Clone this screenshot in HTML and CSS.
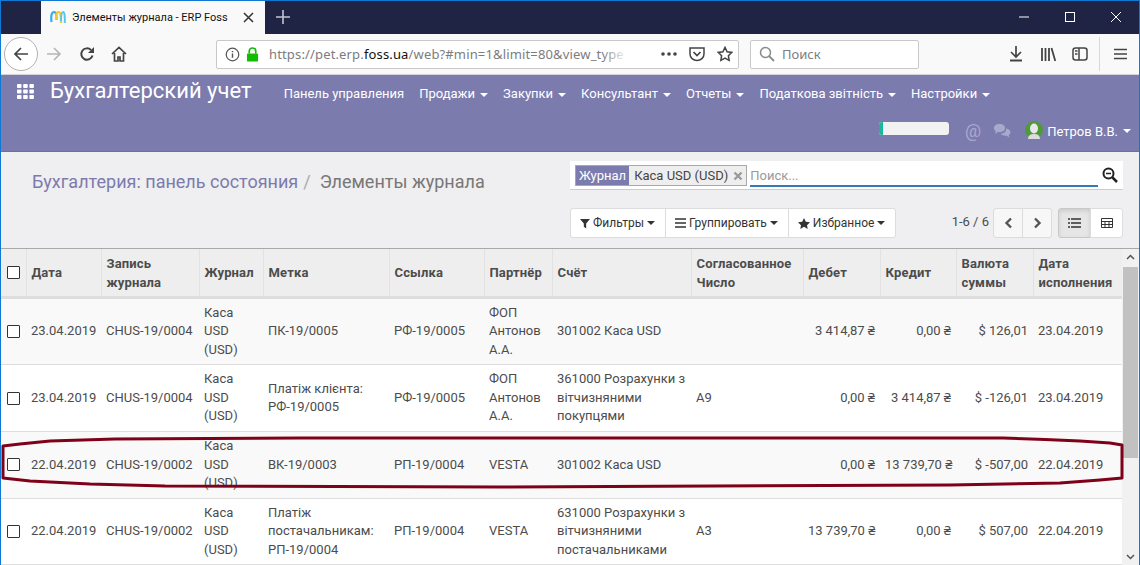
FILE: index.html
```html
<!DOCTYPE html>
<html lang="ru">
<head>
<meta charset="utf-8">
<title>Элементы журнала - ERP Foss</title>
<link rel="stylesheet" href="styles.css">
</head>
<body>
<div class="window">
  <div class="titlebar">
    <div class="tab">
      <svg class="favicon" width="16" height="18" viewBox="0 0 16 18"><path d="M1.500 13C.8 7 1.500 3 4 3s2.500 4 2.500 8" fill="none" stroke="#35aef0" stroke-width="2.200"/><path d="M6 11c0-5 .2-8 2.500-8S11 8 11 14" fill="none" stroke="#f5c62e" stroke-width="2.200"/><path d="M11 12c0-6 .3-9 2-9s2 5 1.800 11" fill="none" stroke="#58c6ea" stroke-width="2"/></svg>
      <span class="tab-title">Элементы журнала - ERP Foss</span>
      <svg class="tab-close" width="11" height="11" viewBox="0 0 11 11"><path d="M1 1l9 9M10 1l-9 9" stroke="#333" stroke-width="1.500"/></svg>
    </div>
    <svg class="newtab" width="14" height="14" viewBox="0 0 14 14"><path d="M7 0v14M0 7h14" stroke="#c4c5d2" stroke-width="1.600"/></svg>
    <div class="winbtns">
      <svg width="12" height="12" viewBox="0 0 12 12"><path d="M1 6h10" stroke="#fff"/></svg>
      <svg width="12" height="12" viewBox="0 0 12 12"><rect x="1.500" y="1.500" width="9" height="9" fill="none" stroke="#fff"/></svg>
      <svg width="12" height="12" viewBox="0 0 12 12"><path d="M1 1l10 10M11 1L1 11" stroke="#fff"/></svg>
    </div>
  </div>

  <div class="toolbar">
    <div class="nav-back"><svg width="16" height="16" viewBox="0 0 16 16"><path d="M15 8H2M8 2L2 8l6 6" fill="none" stroke="#444" stroke-width="1.700"/></svg></div>
    <svg class="tb-ico fwd" width="16" height="16" viewBox="0 0 16 16"><path d="M1 8h13M8 2l6 6-6 6" fill="none" stroke="#b5b5b8" stroke-width="1.600"/></svg>
    <svg class="tb-ico reload" width="16" height="16" viewBox="0 0 16 16"><path d="M13.500 9.500A5.700 5.700 0 1 1 12 4" fill="none" stroke="#444" stroke-width="2"/><path d="M15 1v6H9z" fill="#444"/></svg>
    <svg class="tb-ico home" width="16" height="16" viewBox="0 0 16 16"><path d="M1 8l7-6.500L15 8M3.500 7v8h3.500v-4h2v4h3.500V7" fill="none" stroke="#444" stroke-width="1.700"/></svg>
    <div class="urlbar">
      <svg class="info" width="15" height="15" viewBox="0 0 16 16"><circle cx="8" cy="8" r="6.700" fill="none" stroke="#555" stroke-width="1.300"/><path d="M8 7v4.500M8 4.200v1.500" stroke="#555" stroke-width="1.500"/></svg>
      <svg class="lock" width="13" height="15" viewBox="0 0 14 16"><path d="M3.500 7V4.500a3.500 3.500 0 0 1 7 0V7" fill="none" stroke="#12bc00" stroke-width="1.800"/><rect x="1" y="7" width="12" height="8.500" rx="1" fill="#12bc00"/></svg>
      <span class="url">https://pet.erp.<b>foss.ua</b>/web?#min=1&amp;limit=80&amp;view_type</span>
      <span class="url-fade"></span>
      <svg class="dots" width="16" height="4" viewBox="0 0 16 4"><circle cx="2" cy="2" r="1.800" fill="#444"/><circle cx="8" cy="2" r="1.800" fill="#444"/><circle cx="14" cy="2" r="1.800" fill="#444"/></svg>
      <svg class="pocket" width="16" height="16" viewBox="0 0 16 16"><path d="M1 2h14v6a7 6.500 0 0 1-14 0z" fill="none" stroke="#444" stroke-width="1.500"/><path d="M4.500 6L8 9.500 11.500 6" fill="none" stroke="#444" stroke-width="1.700"/></svg>
      <svg class="star" width="16" height="16" viewBox="0 0 17 17"><path d="M8.500 1.500l2.200 4.600 5 .7-3.600 3.500.8 5-4.400-2.400-4.400 2.400.8-5L1.300 6.800l5-.7z" fill="none" stroke="#444" stroke-width="1.600"/></svg>
    </div>
    <div class="websearch">
      <svg width="16" height="16" viewBox="0 0 16 16"><circle cx="6.500" cy="6.500" r="5" fill="none" stroke="#8a8a8a" stroke-width="1.500"/><path d="M10 10l5 5" stroke="#8a8a8a" stroke-width="1.800"/></svg>
      <span>Поиск</span>
    </div>
    <div class="tb-right">
      <svg class="t-dl" width="14" height="16" viewBox="0 0 14 16"><path d="M7 0v10M2 6l5 5 5-5" fill="none" stroke="#444" stroke-width="1.700"/><path d="M1 14.500h12" stroke="#444" stroke-width="2"/></svg>
      <svg class="t-lib" width="15" height="15" viewBox="0 0 15 15"><path d="M1 1v13M4.500 1v13M8 1v13M10.500 1l3.800 13" fill="none" stroke="#444" stroke-width="1.800"/></svg>
      <svg class="t-side" width="16" height="14" viewBox="0 0 16 14"><rect x="1" y="1" width="14" height="12" rx="2.500" fill="none" stroke="#444" stroke-width="1.500"/><path d="M7 1v12M3 4h2.500M3 7h2.500" stroke="#444" stroke-width="1.500"/></svg>
      <i class="tb-sep"></i>
      <svg class="t-menu" width="13" height="12" viewBox="0 0 13 12"><path d="M0 1.500h13M0 6h13M0 10.500h13" stroke="#444" stroke-width="1.600"/></svg>
    </div>
  </div>

  <header class="appbar">
    <div class="app-main">
      <svg class="apps" width="17" height="15" viewBox="0 0 17 15"><g fill="#fff"><rect width="4.500" height="4" rx=".8"/><rect x="6.200" width="4.500" height="4" rx=".8"/><rect x="12.400" width="4.500" height="4" rx=".8"/><rect y="5.500" width="4.500" height="4" rx=".8"/><rect x="6.200" y="5.500" width="4.500" height="4" rx=".8"/><rect x="12.400" y="5.500" width="4.500" height="4" rx=".8"/><rect y="11" width="4.500" height="4" rx=".8"/><rect x="6.200" y="11" width="4.500" height="4" rx=".8"/><rect x="12.400" y="11" width="4.500" height="4" rx=".8"/></g></svg>
      <span class="brand">Бухгалтерский учет</span>
      <nav class="menu">
        <a>Панель управления</a>
        <a>Продажи<i class="caret"></i></a>
        <a>Закупки<i class="caret"></i></a>
        <a>Консультант<i class="caret"></i></a>
        <a>Отчеты<i class="caret"></i></a>
        <a>Податкова звітність<i class="caret"></i></a>
        <a>Настройки<i class="caret"></i></a>
      </nav>
    </div>
    <div class="app-sub">
      <div class="progress"><i></i></div>
      <span class="at">@</span>
      <svg class="chat" width="18" height="15" viewBox="0 0 18 15"><path d="M1 5c0-2.500 2.500-4 5.500-4S12 2.500 12 5s-2.500 4-5.500 4H5l-3 2 .8-2.700C1.700 7.700 1 6.500 1 5z" fill="#a9a9cc"/><path d="M13 5.500c2.500.3 4.500 1.700 4.500 3.700 0 1.200-.7 2.200-1.700 2.900l.6 2.400-2.800-1.800c-2.500.3-5-.5-6-2.200 3 .2 6-1.500 5.400-5z" fill="#a9a9cc"/></svg>
      <svg class="avatar" width="18" height="18" viewBox="0 0 18 18"><circle cx="9" cy="9" r="9" fill="#4f9a3a"/><ellipse cx="9" cy="7.500" rx="4" ry="5" fill="#e8e8e8"/><path d="M3 18c0-4 3-5 6-5s6 1 6 5z" fill="#dcdcdc"/></svg>
      <span class="user">Петров В.В.</span><i class="caret"></i>
    </div>
  </header>

  <section class="panel">
    <div class="panel-top">
      <h1 class="crumbs"><a>Бухгалтерия: панель состояния</a><span class="slash">/</span><span class="cur">Элементы журнала</span></h1>
      <div class="search">
        <div class="facet"><span class="facet-label">Журнал</span><span class="facet-val">Каса USD (USD)</span><svg width="10" height="10" viewBox="0 0 10 10"><path d="M1.500 1.500l7 7M8.500 1.500l-7 7" stroke="#9a9a9a" stroke-width="2.400"/></svg></div>
        <div class="search-input">Поиск...</div>
        <svg class="search-ico" width="16" height="16" viewBox="0 0 16 16"><circle cx="6.500" cy="6.500" r="5" fill="none" stroke="#222" stroke-width="2"/><path d="M10.500 10.500L15 15" stroke="#222" stroke-width="2.500"/><path d="M4 6.500h5" stroke="#222" stroke-width="1.500"/></svg>
      </div>
    </div>
    <div class="panel-bottom">
      <div class="btn-group">
        <button class="btn"><svg width="10" height="11" viewBox="0 0 11 11"><path d="M0 .5h11L6.800 5.500V11L4.200 9V5.500z" fill="#333"/></svg>Фильтры<i class="caret dark"></i></button>
        <button class="btn"><svg width="11" height="10" viewBox="0 0 11 10"><path d="M0 1h11M0 5h11M0 9h11" stroke="#333" stroke-width="1.600"/></svg>Группировать<i class="caret dark"></i></button>
        <button class="btn"><svg width="12" height="11" viewBox="0 0 12 11"><path d="M6 0l1.800 3.700 4.200.6-3 2.900.7 3.800L6 8.800 2.300 11 3 7.200 0 4.300l4.200-.6z" fill="#333"/></svg>Избранное<i class="caret dark"></i></button>
      </div>
      <div class="pager">
        <span class="pager-txt">1-6 / 6</span>
        <div class="pager-btns">
          <button class="pbtn"><svg width="9" height="12" viewBox="0 0 9 12"><path d="M7 1.500L2.500 6 7 10.500" fill="none" stroke="#555" stroke-width="2.400"/></svg></button>
          <button class="pbtn"><svg width="9" height="12" viewBox="0 0 9 12"><path d="M2 1.500L6.500 6 2 10.500" fill="none" stroke="#555" stroke-width="2.400"/></svg></button>
        </div>
        <div class="view-btns">
          <button class="vbtn on"><svg width="13" height="10" viewBox="0 0 13 10"><path d="M3 1h10M3 5h10M3 9h10" stroke="#333" stroke-width="1.600"/><path d="M0 1h2M0 5h2M0 9h2" stroke="#333" stroke-width="1.600"/></svg></button>
          <button class="vbtn"><svg width="12" height="10" viewBox="0 0 12 10"><path d="M.5.500h11v9H.500zM.5 3.500h11M.5 6.500h11M4 3.500v6M8 3.500v6" fill="none" stroke="#333"/></svg></button>
        </div>
      </div>
    </div>
  </section>

  <div class="list">
    <table class="grid">
      <colgroup>
        <col class="c0"><col class="c1"><col class="c2"><col class="c3"><col class="c4"><col class="c5"><col class="c6"><col class="c7"><col class="c8"><col class="c9"><col class="c10"><col class="c11"><col class="c12">
      </colgroup>
      <thead>
        <tr>
          <th><i class="cb"></i></th><th>Дата</th><th>Запись журнала</th><th>Журнал</th><th>Метка</th><th>Ссылка</th><th>Партнёр</th><th>Счёт</th><th>Согласованное Число</th><th>Дебет</th><th>Кредит</th><th>Валюта суммы</th><th>Дата исполнения</th>
        </tr>
      </thead>
      <tbody>
        <tr class="odd">
          <td><i class="cb"></i></td><td>23.04.2019</td><td>CHUS-19/0004</td><td>Каса USD (USD)</td><td>ПК-19/0005</td><td>РФ-19/0005</td><td>ФОП Антонов А.А.</td><td>301002 Каса USD</td><td></td><td class="r">3 414,87 ₴</td><td class="r">0,00 ₴</td><td class="r">$ 126,01</td><td>23.04.2019</td>
        </tr>
        <tr>
          <td><i class="cb"></i></td><td>23.04.2019</td><td>CHUS-19/0004</td><td>Каса USD (USD)</td><td>Платіж клієнта: РФ-19/0005</td><td>РФ-19/0005</td><td>ФОП Антонов А.А.</td><td>361000 Розрахунки з вітчизняними покупцями</td><td>A9</td><td class="r">0,00 ₴</td><td class="r">3 414,87 ₴</td><td class="r">$ -126,01</td><td>23.04.2019</td>
        </tr>
        <tr class="odd">
          <td><i class="cb"></i></td><td>22.04.2019</td><td>CHUS-19/0002</td><td>Каса USD (USD)</td><td>ВК-19/0003</td><td>РП-19/0004</td><td>VESTA</td><td>301002 Каса USD</td><td></td><td class="r">0,00 ₴</td><td class="r">13 739,70 ₴</td><td class="r">$ -507,00</td><td>22.04.2019</td>
        </tr>
        <tr>
          <td><i class="cb"></i></td><td>22.04.2019</td><td>CHUS-19/0002</td><td>Каса USD (USD)</td><td>Платіж постачальникам: РП-19/0004</td><td>РП-19/0004</td><td>VESTA</td><td>631000 Розрахунки з вітчизняними постачальниками</td><td>A3</td><td class="r">13 739,70 ₴</td><td class="r">0,00 ₴</td><td class="r">$ 507,00</td><td>22.04.2019</td>
        </tr>
      </tbody>
    </table>
    <div class="scrollbar">
      <svg width="9" height="6" viewBox="0 0 9 6"><path d="M1 5l3.500-3.500L8 5" fill="none" stroke="#555" stroke-width="1.500"/></svg>
      <div class="thumb"></div>
      <svg width="9" height="6" viewBox="0 0 9 6"><path d="M1 1l3.500 3.500L8 1" fill="none" stroke="#555" stroke-width="1.500"/></svg>
    </div>
  </div>

  <svg class="marker" width="1140" height="56" viewBox="0 0 1140 56"><path d="M3 10 L20 8 L50 5 L115 3 L300 2 L1003 2 L1045 3.500 L1080 5 L1110 7 L1122 9 L1122 42 L1100 44 L1060 47 L950 49 L500 51 L165 50 L90 48 L30 45 L3 42 Z" fill="none" stroke="#7f0019" stroke-width="3" stroke-linejoin="round"/></svg>
</div>
</body>
</html>
```
FILE: styles.css
```css
* { box-sizing: border-box; }
html, body { margin: 0; padding: 0; height: 100%; overflow: hidden; background: #fff; }
body { font-family: Roboto, "Noto Sans", sans-serif; font-size: 13px; color: #4c4c4c; }
.window { position: relative; width: 1140px; height: 565px; border: 1px solid #0f78d4; border-bottom: 0; overflow: hidden; display: flex; flex-direction: column; }

.titlebar { flex: 0 0 33px; background: #1f2344; display: flex; align-items: stretch; }
.tab { margin-left: 40px; width: 224px; background: #f9f9fa; display: flex; align-items: center; padding: 0 11px 0 9px; font-family: Roboto, sans-serif; font-size: 11px; color: #111; }
.favicon { margin-right: 6px; flex: none; }
.tab-title { flex: 1; white-space: nowrap; overflow: hidden; }
.newtab { align-self: center; margin-left: 11px; margin-top: -1px; }
.winbtns { margin-left: auto; display: flex; align-items: center; gap: 34px; padding-right: 17px; margin-top: -1px; }

.toolbar { flex: 0 0 41px; background: #f9f9fa; border-bottom: 1px solid #d4d4d6; display: flex; align-items: center; font-family: "Noto Sans", sans-serif; }
.nav-back { width: 34px; height: 34px; margin-left: 3px; border: 1px solid #b1b1b3; border-radius: 50%; background: #fff; display: flex; align-items: center; justify-content: center; flex: none; }
.tb-ico { flex: none; }
.fwd { margin-left: 8px; }
.reload { margin-left: 17px; }
.home { margin-left: 16px; }
.urlbar { width: 523px; height: 29px; margin-left: 89px; background: #fff; border: 1px solid #c9c9cb; border-radius: 2px; display: flex; align-items: center; padding-left: 8px; position: relative; }
.info { flex: none; }
.lock { margin-left: 6px; flex: none; }
.url { margin-left: 10px; width: 356px; flex: none; overflow: hidden; white-space: nowrap; color: #7c7c80; font-size: 13px; letter-spacing: .15px; }
.url b { font-weight: 400; color: #111; }
.url-fade { position: absolute; left: 385px; width: 26px; top: 0; bottom: 0; background: linear-gradient(90deg, rgba(255,255,255,0), #fff); }
.dots { margin-left: 36px; flex: none; }
.pocket { margin-left: 12px; flex: none; }
.star { margin-left: 12px; flex: none; }
.websearch { margin-left: 11px; width: 169px; height: 29px; background: #fff; border: 1px solid #c9c9cb; border-radius: 2px; display: flex; align-items: center; gap: 7px; padding-left: 8px; color: #7c7c80; font-size: 13px; flex: none; }
.tb-right { margin-left: auto; display: flex; align-items: center; padding-right: 12px; }
.t-lib { margin-left: 18px; }
.t-side { margin-left: 16px; }
.tb-sep { width: 1px; height: 34px; background: #d8d8da; margin-left: 11px; }
.t-menu { margin-left: 14px; }

.appbar { flex: 0 0 76px; background: #7c7bad; color: #fff; display: flex; flex-direction: column; }
.app-main { display: flex; align-items: center; height: 34px; padding-left: 16px; }
.apps { flex: none; margin-top: -1px; }
.brand { font-size: 22px; margin-left: 16px; white-space: nowrap; margin-top: -3px; }
.menu { display: flex; margin-left: 32px; gap: 15px; font-size: 13px; white-space: nowrap; margin-top: 3px; }
.caret { display: inline-block; width: 0; height: 0; border-top: 4px solid #fff; border-left: 4px solid transparent; border-right: 4px solid transparent; margin-left: 5px; vertical-align: middle; }
.caret.dark { border-top-color: #333; margin-left: 0; }
.app-sub { display: flex; align-items: center; justify-content: flex-end; height: 42px; padding-right: 8px; }
.progress { width: 70px; height: 13px; background: #f2f2f2; border-radius: 3px; overflow: hidden; margin-top: -3px; }
.progress i { display: block; width: 4px; height: 100%; background: #1fb59b; }
.at { margin-left: 16px; color: #a9a9cc; font-size: 18px; }
.chat { margin-left: 12px; }
.avatar { margin-left: 14px; }
.user { margin-left: 4px; font-size: 13px; margin-top: 2px; }
.app-sub .caret { margin-top: 2px; }

.panel { flex: 0 0 97px; background: #efeef0; border-top: 1px solid #6e6d9c; }
.panel-top { height: 52px; display: flex; align-items: flex-start; justify-content: space-between; padding-left: 31px; padding-right: 16px; padding-top: 9px; }
.crumbs { margin: 11px 0 0; font-size: 18px; font-weight: 400; white-space: nowrap; line-height: 20px; }
.crumbs a { color: #7c7bad; }
.slash { color: #aaa; margin: 0 9px 0 5px; }
.cur { color: #777; }
.search { width: 553px; height: 29px; background: #fff; border-bottom: 1px solid #ccc; display: flex; align-items: center; padding: 0 5px; position: relative; }
.facet { display: flex; align-items: center; height: 21px; margin-top: 1px; border: 1px solid #a8a8a8; background: #efeeef; color: #444; flex: none; }
.facet-label { background: #7c7bad; color: #fff; height: 100%; padding: 0 3px; line-height: 19px; }
.facet-val { padding: 0 5px; }
.facet svg { margin: 0 3px 0 0; }
.search-input { flex: 1; margin-left: 3px; margin-right: 4px; height: 23px; line-height: 23px; border-bottom: 2px solid #337ab7; color: #999; }
.search-ico { flex: none; }
.panel-bottom { display: flex; justify-content: space-between; padding-right: 16px; padding-left: 569px; height: 44px; }
.btn-group { display: flex; height: 30px; margin-top: 4px; }
button { font: inherit; }
.btn { background: #fff; color: #333; border: 1px solid #dcdcdc; margin-left: -1px; padding: 0 10px 0 9px; display: flex; align-items: center; gap: 3px; font-size: 12px; white-space: nowrap; border-radius: 0; }
.btn:first-child { border-radius: 3px 0 0 3px; margin-left: 0; }
.btn:last-child { border-radius: 0 3px 3px 0; }
.pager { display: flex; align-items: flex-start; margin-top: 4px; }
.pager-txt { color: #4c4c4c; margin-right: 5px; line-height: 28px; }
.pager-btns, .view-btns { display: flex; height: 30px; }
.pbtn, .vbtn { width: 30px; height: 30px; background: #f7f7f7; border: 1px solid #dcdcdc; margin-left: -1px; display: flex; align-items: center; justify-content: center; padding: 0; }
.pbtn:first-child, .vbtn:first-child { border-radius: 3px 0 0 3px; }
.pbtn:last-child, .vbtn:last-child { border-radius: 0 3px 3px 0; }
.view-btns { margin-left: 7px; }
.vbtn { width: 33px; background: #fff; }
.vbtn.on { background: #e6e6e6; box-shadow: inset 0 2px 4px rgba(0,0,0,.12); border-color: #c8c8c8; }

.list { flex: 1; display: flex; min-height: 0; border-top: 1px solid #a8a8a8; overflow: hidden; }
.grid { width: 1121px; table-layout: fixed; border-collapse: collapse; flex: none; align-self: flex-start; }
.c0 { width: 25px; } .c1 { width: 75px; } .c2 { width: 98px; } .c3 { width: 64px; } .c4 { width: 126px; } .c5 { width: 95px; } .c6 { width: 68px; } .c7 { width: 139px; } .c8 { width: 112px; } .c9 { width: 77px; } .c10 { width: 76px; } .c11 { width: 77px; } .c12 { width: 89px; }
th { background: #eeeeee; border-left: 1px solid #e2e2e2; border-bottom: 3px solid #dedede; padding: 6px 5px 3.500px; text-align: left; vertical-align: middle; font-weight: 700; font-size: 13px; line-height: 18.570px; letter-spacing: .15px; color: #4c4c4c; }
th:first-child, td:first-child { border-left: 0; padding: 0 0 0 6px; }
td { padding: 5px; line-height: 18.570px; vertical-align: middle; border-bottom: 1px solid #dedede; color: #4c4c4c; background: #fff; font-size: 13px; overflow: hidden; }
tr.odd td { background: #f9f9f9; }
td.r { text-align: right; white-space: nowrap; }
.cb { display: block; width: 13px; height: 13px; border: 1px solid #333; background: #fff; border-radius: 1px; }
.scrollbar { flex: 1; background: #f1f1f1; display: flex; flex-direction: column; align-items: center; justify-content: space-between; padding: 5px 0 5px; position: relative; }
.thumb { position: absolute; left: 1px; right: 1px; top: 18px; height: 191px; background: #c1c1c1; }

.marker { position: absolute; left: -1px; top: 435px; pointer-events: none; }
```
